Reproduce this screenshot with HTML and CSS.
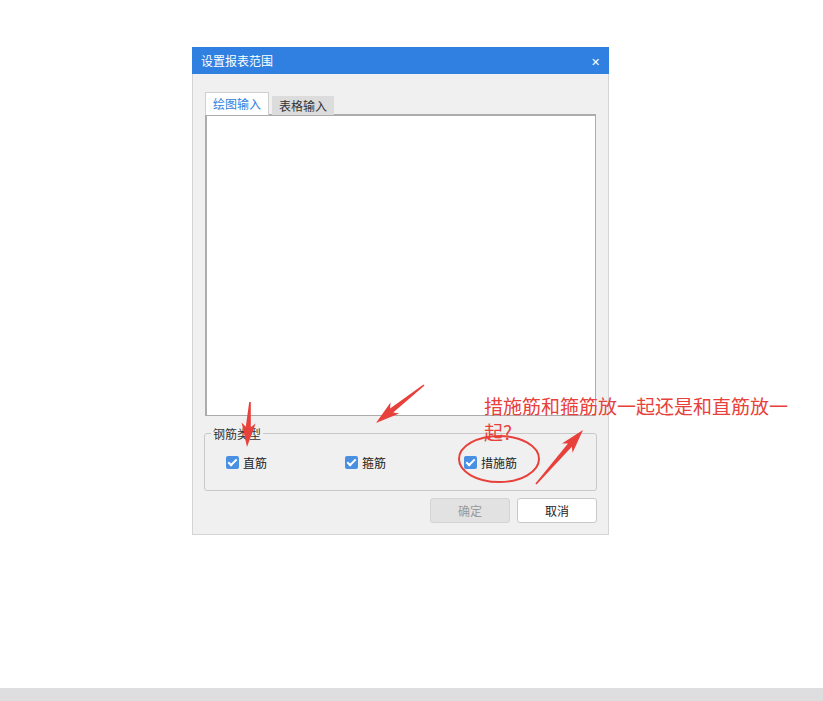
FILE: index.html
```html
<!DOCTYPE html>
<html lang="zh-CN">
<head>
    <meta charset="UTF-8">
    <title>设置报表范围</title>
    <link rel="stylesheet" href="styles.css">
</head>
<body>
    <div class="page">
        <div class="dialog">
            <div class="dialog-title">
                <span>设置报表范围</span>
                <span class="dialog-close">✕</span>
            </div>
            <div class="dialog-body">
                <div class="tabs">
                    <div class="tab active">绘图输入</div>
                    <div class="tab">表格输入</div>
                </div>
                <div class="tab-panel"></div>
                <fieldset class="group">
                    <legend>钢筋类型</legend>
                    <label class="check"><span class="box"></span>直筋</label>
                    <label class="check"><span class="box"></span>箍筋</label>
                    <label class="check"><span class="box"></span>措施筋</label>
                </fieldset>
                <div class="actions">
                    <button class="btn" disabled>确定</button>
                    <button class="btn">取消</button>
                </div>
            </div>
        </div>

        <!-- 批注 -->
        <div class="note">措施筋和箍筋放一起还是和直筋放一起?</div>
        <svg class="marks" width="823" height="688" viewBox="0 0 823 688">
            <g fill="#e8403a">
                <polygon points="250.8,402 250.8,427.2 255.6,423.5 247,447 241.6,422.5 245.8,426.8 249.2,402"/>
                <polygon points="424.5,385.6 393.2,412.6 399.2,413.6 376,423 390.5,402.6 390.1,408.6 423.5,384.4"/>
                <polygon points="536.6,484.5 571.8,446.7 572.6,452.7 583,430 562,443.5 568,443.5 535.4,483.5"/>
            </g>
            <ellipse cx="499" cy="459" rx="40" ry="23" fill="none" stroke="#e8403a" stroke-width="2"/>
        </svg>
    </div>
    <div class="bottom-bar"></div>
</body>
</html>
```

FILE: styles.css
```css
body {
    margin: 0;
    background-color: #fff;
    font-family: "Noto Sans CJK SC", "Microsoft YaHei", sans-serif;
    font-size: 12px;
    color: #222;
}
.page {
    position: relative;
    height: 688px;
    padding: 47px 0 0 192px;
    box-sizing: border-box;
}
.bottom-bar {
    height: 13px;
    background-color: #dedee0;
}
.dialog {
    width: 417px;
}
.dialog-title {
    display: flex;
    justify-content: space-between;
    align-items: center;
    height: 27px;
    padding: 0 9px 0 9px;
    background-color: #2f80e0;
    color: #fff;
    font-size: 12px;
}
.dialog-close {
    font-size: 11px;
}
.dialog-body {
    background-color: #f0f0f0;
    border: 1px solid #d4d4d4;
    border-top: none;
    padding: 18px 10px 11px 12px;
}
.tabs {
    display: flex;
    align-items: flex-end;
    gap: 3px;
    margin-bottom: -1px;
    position: relative;
}
.tab {
    height: 19px;
    line-height: 19px;
    padding: 0 7px;
    white-space: nowrap;
    background-color: #dcdcdc;
    color: #333;
}
.tab.active {
    height: 22px;
    line-height: 22px;
    background-color: #fff;
    border: 1px solid #cfcfcf;
    border-bottom: none;
    color: #2f80e0;
    padding: 0 7px;
}
.tab-panel {
    width: 391px;
    height: 302px;
    box-sizing: border-box;
    background-color: #fff;
    border: 2px solid #acacac;
    border-right-width: 1px;
    border-bottom-width: 1px;
}
.group {
    margin: 9px 0 0 -1px;
    width: 393px;
    box-sizing: border-box;
    height: 66px;
    padding: 12px 0 0 21px;
    border: 1px solid #c8c8c8;
    border-radius: 3px;
    display: flex;
    align-items: center;
}
.group legend {
    padding: 0 2px;
    margin-left: -15px;
    color: #333;
}
.check {
    display: flex;
    align-items: center;
    width: 119px;
    margin-top: -20px;
}
.box {
    position: relative;
    width: 13px;
    height: 13px;
    border-radius: 2px;
    background-color: #4a90e2;
    margin-right: 4px;
}
.box::after {
    content: "";
    position: absolute;
    left: 4px;
    top: 1px;
    width: 3px;
    height: 7px;
    border: solid #fff;
    border-width: 0 2px 2px 0;
    transform: rotate(45deg);
}
.actions {
    display: flex;
    justify-content: flex-end;
    gap: 7px;
    margin-top: 7px;
    padding-right: 1px;
}
.btn {
    width: 80px;
    height: 25px;
    font-family: inherit;
    font-size: 12px;
    color: #222;
    background-color: #fff;
    border: 1px solid #c8c8c8;
    border-radius: 3px;
}
.btn:disabled {
    background-color: #e2e2e2;
    color: #999;
    border-color: #d4d4d4;
}
.note {
    position: absolute;
    left: 484px;
    top: 393px;
    width: 310px;
    font-size: 19px;
    line-height: 26px;
    color: #e8403a;
}
.marks {
    position: absolute;
    left: 0;
    top: 0;
    pointer-events: none;
}
```
